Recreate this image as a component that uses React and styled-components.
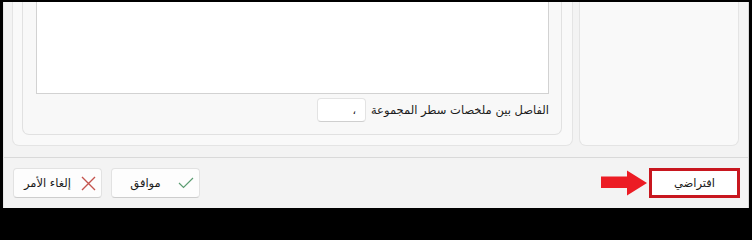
import React from 'react';
import styled, { createGlobalStyle } from 'styled-components';

const GlobalStyle = createGlobalStyle`
  html, body {
    margin: 0;
    padding: 0;
    background: #000;
  }
  * {
    box-sizing: border-box;
  }
`;

const Frame = styled.div`
  width: 752px;
  height: 211px;
  border-style: solid;
  border-color: #000;
  border-width: 2px 3px 3px 3px;
  font-family: "DejaVu Sans", "Noto Sans", sans-serif;
  font-size: 11.5px;
  color: #1b1b1b;
`;

const Window = styled.div`
  height: 100%;
  background: #f3f3f3;
  border-left: 1px solid #e6e6e6;
  border-right: 1px solid #d6d6d6;
  display: flex;
  flex-direction: column;
`;

const TopArea = styled.div`
  height: 144px;
  display: flex;
  gap: 6px;
  padding: 0 9px 0 8px;
`;

const Panel = styled.div`
  display: flex;
  flex-direction: column;
  background: ${(p) => (p.inner ? '#f8f8f8' : '#f9f9f9')};
  border: 1px solid ${(p) => (p.inner ? '#e1e1e1' : '#e4e4e4')};
  border-top: none;
  border-radius: 0 0 7px 7px;
  padding: ${(p) => p.pad || '0'};
  flex: ${(p) => (p.width ? '0 0 auto' : '1')};
  width: ${(p) => (p.width ? `${p.width}px` : 'auto')};
`;

const TextBox = styled.div`
  flex: 1;
  background: #fff;
  border: 1px solid #d2d2d2;
  border-top: none;
`;

const FieldRow = styled.div`
  height: 24px;
  margin-top: 4px;
  display: flex;
  align-items: center;
  gap: 5px;
`;

const Label = styled.span`
  white-space: nowrap;
`;

const Input = styled.div`
  width: 49px;
  height: 24px;
  background: #fff;
  border: 1px solid #e3e3e3;
  border-bottom-color: #cfcfcf;
  border-radius: 4px;
  display: flex;
  align-items: center;
  padding: 0 9px;
  font-size: 11px;
`;

const Footer = styled.div`
  margin-top: 11px;
  border-top: 1px solid #d9d9d9;
  padding: 10px 8px 10px 9px;
  display: flex;
  align-items: center;
  justify-content: space-between;
`;

const Group = styled.div`
  display: flex;
  align-items: center;
  gap: ${(p) => p.gap || 0}px;
`;

const Button = styled.div`
  width: 89px;
  height: 30px;
  background: #fdfdfd;
  border: 1px solid #e2e2e2;
  border-bottom-color: #cdcdcd;
  border-radius: 4px;
  display: flex;
  align-items: center;
  padding: 0 3px;
`;

const IconBox = styled.span`
  width: 20px;
  display: flex;
  justify-content: center;
`;

const ButtonText = styled.span`
  flex: 1;
  text-align: center;
`;

const Highlight = styled.div`
  width: 91px;
  height: 30px;
  border: 3px solid #c8171f;
  background: #fff;
  display: flex;
  align-items: center;
  justify-content: center;
`;

const CrossIcon = () => (
  <svg width="15" height="15" viewBox="0 0 15 15">
    <path d="M1 1 L14 14 M14 1 L1 14" stroke="#c4544e" strokeWidth="1.4" fill="none" />
  </svg>
);

const CheckIcon = () => (
  <svg width="16" height="12" viewBox="0 0 16 12">
    <path d="M1 6 L5.5 10.5 L15 1" stroke="#5c9d72" strokeWidth="1.2" fill="none" />
  </svg>
);

const Arrow = () => (
  <svg width="46" height="26" viewBox="0 0 46 26">
    <path d="M0 6.5 H26 V0.5 L46 13 L26 25.5 V18 H0 Z" fill="#ec1c24" />
  </svg>
);

export default function App() {
  return (
    <>
      <GlobalStyle />
      <Frame dir="rtl">
        <Window>
          <TopArea>
            <Panel width={160} />
            <Panel pad="0 10px 10px 9px">
              <Panel inner pad="0 12px 12px 13px">
                <TextBox />
                <FieldRow>
                  <Label>الفاصل بين ملخصات سطر المجموعة</Label>
                  <Input>،</Input>
                </FieldRow>
              </Panel>
            </Panel>
          </TopArea>
          <Footer>
            <Group gap={2}>
              <Highlight>افتراضي</Highlight>
              <Arrow />
            </Group>
            <Group gap={9}>
              <Button>
                <IconBox><CheckIcon /></IconBox>
                <ButtonText>موافق</ButtonText>
              </Button>
              <Button>
                <IconBox><CrossIcon /></IconBox>
                <ButtonText>إلغاء الأمر</ButtonText>
              </Button>
            </Group>
          </Footer>
        </Window>
      </Frame>
    </>
  );
}
